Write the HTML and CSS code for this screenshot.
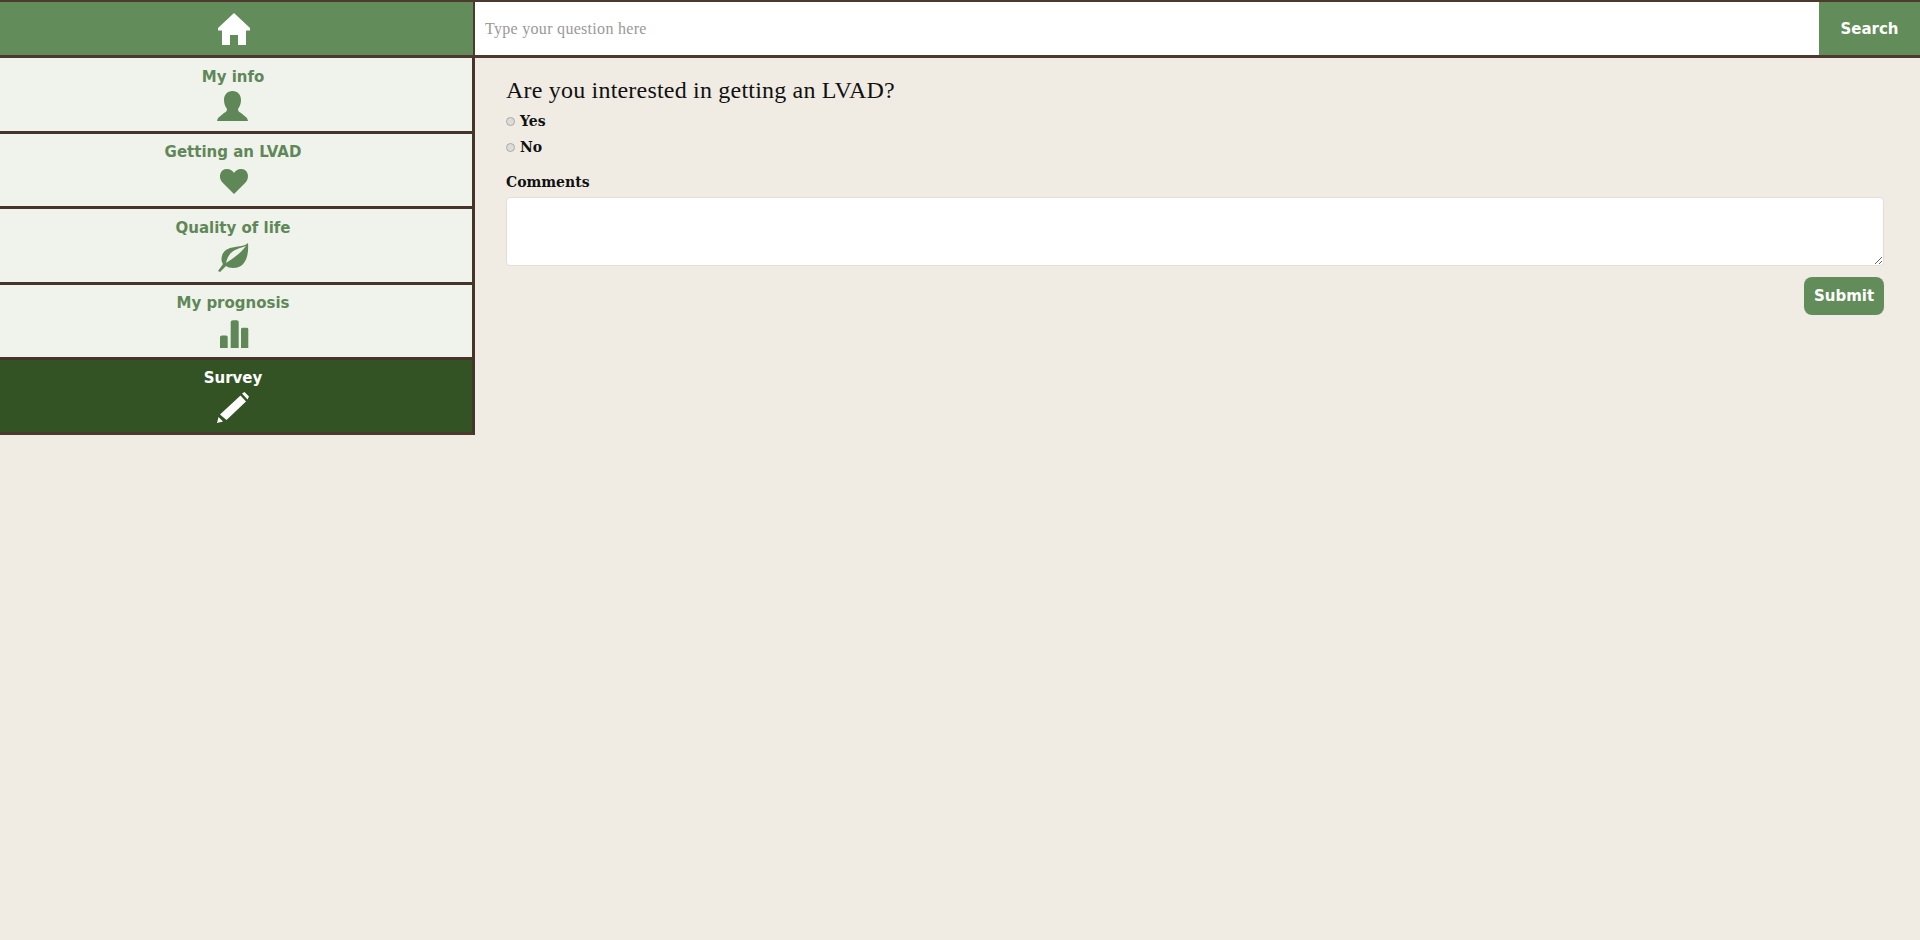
FILE: index.html
```html
<!DOCTYPE html>
<html lang="en">
<head>
    <meta charset="UTF-8">
    <title>Survey</title>
    <link rel="stylesheet" href="styles.css">
</head>
<body>
    <header class="topbar">
        <a class="home" href="#">
            <svg class="home-icon" viewBox="0 0 32 32"><path d="M16 0 L32 15 L32 17.5 L28 17.5 L28 32 L20 32 L20 22 L12 22 L12 32 L4 32 L4 17.5 L0 17.5 L0 15 Z"/></svg>
        </a>
        <form class="search">
            <input class="search-input" type="text" placeholder="Type your question here">
            <button class="search-button" type="button">Search</button>
        </form>
    </header>

    <div class="page">
        <nav class="sidebar">
            <a class="nav-item" href="#">
                <span>My info</span>
                <svg class="nav-icon" viewBox="0 0 32 32"><path d="M15.5 2 C21 2 24 6 24 11 C24 15 22.5 18 21 20 C21 22 22 23 24 24 L30 29 L31 32 L0 32 L1 29 L7 24 C9 23 10 22 10 20 C8.5 18 7 15 7 11 C7 6 10 2 15.5 2 Z"/></svg>
            </a>
            <a class="nav-item" href="#">
                <span>Getting an LVAD</span>
                <svg class="nav-icon" viewBox="0 0 32 32"><path d="M17 29 L5 17 C1 12 3 4 10 4 C13 4 16 6 17 8 C18 6 21 4 24 4 C31 4 33 12 29 17 Z"/></svg>
            </a>
            <a class="nav-item" href="#">
                <span>Quality of life</span>
                <svg class="nav-icon" viewBox="0 0 32 32"><path fill-rule="evenodd" d="M31 3 C32 15 29 28 16 28 C13 28 10.5 27 9 26 L3 32 L1 31 L6 24 C3 20 4 11 13 8 C20 6 27 7 31 3 Z M9 23 C14 20 24 13 29 6 C22 9 12 9 9 23 Z"/></svg>
            </a>
            <a class="nav-item" href="#">
                <span>My prognosis</span>
                <svg class="nav-icon" viewBox="0 0 32 32"><path d="M3 21 Q3 19.5 5 19.5 L9 19.5 Q10.7 19.5 10.7 21 L10.7 32 L3 32 Z M13.7 6 Q13.7 4.3 16 4.3 L19.5 4.3 Q21.7 4.3 21.7 6 L21.7 32 L13.7 32 Z M24 13 Q24 11.7 26 11.7 L29.5 11.7 Q31.3 11.7 31.3 13 L31.3 32 L24 32 Z"/></svg>
            </a>
            <a class="nav-item active" href="#">
                <span>Survey</span>
                <svg class="nav-icon" viewBox="0 0 32 32"><path d="M0 33 L1.5 27 L6 31.5 Z M3 24.5 L23.5 5.5 L29 11.5 L9.5 30 Z M25 3.5 L27.5 2 L32 6.5 L30.5 9.5 Z"/></svg>
            </a>
        </nav>

        <main class="content">
            <h2 class="question">Are you interested in getting an LVAD?</h2>
            <label class="option"><input type="radio" name="lvad"> Yes</label>
            <label class="option"><input type="radio" name="lvad"> No</label>
            <label class="comments-label" for="comments">Comments</label>
            <textarea class="comments" id="comments"></textarea>
            <div class="actions">
                <button class="submit" type="button">Submit</button>
            </div>
        </main>
    </div>
</body>
</html>
```

FILE: styles.css
```css
* {
    box-sizing: border-box;
}
html, body {
    height: 100%;
}
body {
    margin: 0;
    background: #f0ece4;
    color: #111;
    font-family: "DejaVu Serif", "Liberation Serif", serif;
    overflow: hidden;
}
.topbar {
    display: flex;
    height: 58px;
    background: #4d3a2f;
    padding: 2px 0 3px;
}
.home {
    display: flex;
    align-items: center;
    justify-content: center;
    width: 473px;
    margin-right: 2px;
    padding-right: 5px;
    background: #628d5a;
}
.home-icon {
    width: 32px;
    height: 32px;
    fill: #fff;
}
.search {
    display: flex;
    flex: 1;
}
.search-input {
    flex: 1;
    border: none;
    outline: none;
    padding: 0 10px;
    background: #fff;
    font-family: "Liberation Serif", serif;
    font-size: 16px;
    letter-spacing: 0.3px;
}
.search-input::placeholder {
    color: #999;
    opacity: 1;
}
.search-button {
    width: 101px;
    border: none;
    background: #628d5a;
    color: #fff;
    font-family: "DejaVu Sans", sans-serif;
    font-weight: bold;
    font-size: 15px;
}
.page {
    display: flex;
    align-items: flex-start;
}
.sidebar {
    display: flex;
    flex-direction: column;
    width: 475px;
    flex-shrink: 0;
    border-right: 3px solid #45342a;
    border-bottom: 3px solid #4d3a2f;
}
.nav-item {
    display: flex;
    flex-direction: column;
    align-items: center;
    height: 75.5px;
    padding-top: 9.5px;
    padding-right: 6px;
    background: #eff3ec;
    color: #5f8757;
    border-bottom: 3px solid #45342a;
    font-family: "DejaVu Sans", sans-serif;
    font-weight: bold;
    font-size: 15px;
    line-height: 18px;
    text-decoration: none;
}
.nav-item.active {
    height: 71.5px;
    padding-top: 8.5px;
    border-bottom: none;
    background: #345325;
    color: #fff;
}
.nav-icon {
    width: 32px;
    height: 32px;
    margin-top: 3.5px;
    overflow: visible;
    flex-shrink: 0;
    fill: currentColor;
}
.content {
    flex: 1;
    padding: 18px 36px 0 31px;
}
.question {
    margin: 0 0 4px;
    font-family: "Liberation Serif", serif;
    font-weight: normal;
    font-size: 24px;
    letter-spacing: 0.2px;
    line-height: 28px;
}
.option {
    display: flex;
    align-items: center;
    gap: 5px;
    height: 26px;
    font-size: 14px;
    font-weight: bold;
}
.option input {
    appearance: none;
    width: 9px;
    height: 9px;
    margin: 0;
    border: 1px solid #a9a9a5;
    border-radius: 50%;
    background: #dcdcd8;
}
.comments-label {
    display: block;
    margin-top: 12px;
    font-size: 14px;
    font-weight: bold;
    line-height: 20px;
}
.comments {
    display: block;
    width: 100%;
    height: 69px;
    margin-top: 4.5px;
    border: 1px solid #e3ded6;
    border-radius: 4px;
    background: #fff;
}
.actions {
    display: flex;
    justify-content: flex-end;
    margin-top: 11px;
}
.submit {
    width: 80px;
    height: 38px;
    border: none;
    border-radius: 8px;
    background: #628d5a;
    color: #fff;
    font-family: "DejaVu Sans", sans-serif;
    font-weight: bold;
    font-size: 15px;
}
```
